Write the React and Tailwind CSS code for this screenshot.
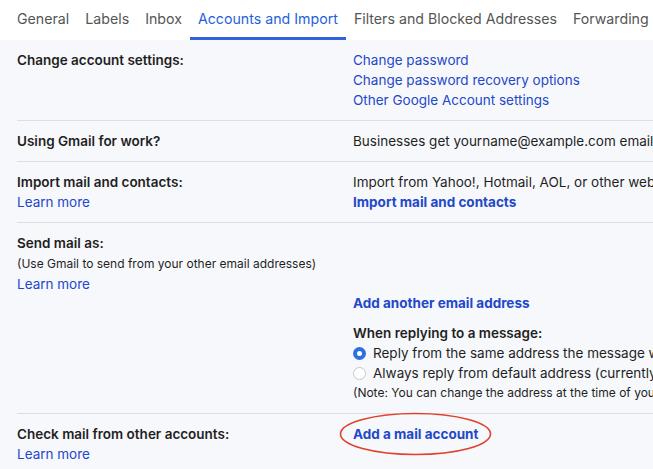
import React from "react";

const tabs = ["General", "Labels", "Inbox", "Accounts and Import", "Filters and Blocked Addresses", "Forwarding"];

function Link({ children, bold }) {
  return <div className={`text-[#2348c9] ${bold ? "font-bold" : ""}`}>{children}</div>;
}

function Row({ left, children, last }) {
  return (
    <div className={`grid grid-cols-[336px_1fr] py-[10px] ${last ? "" : "border-b border-[#dcdee2]"}`}>
      <div>{left}</div>
      <div className="whitespace-nowrap">{children}</div>
    </div>
  );
}

function Radio({ checked, children }) {
  return (
    <div className="flex items-center h-5">
      {checked ? (
        <span className="shrink-0 w-[13px] h-[13px] rounded-full bg-[#2f6fe4] flex items-center justify-center mr-[7px]">
          <span className="w-[5px] h-[5px] rounded-full bg-white" />
        </span>
      ) : (
        <span className="shrink-0 w-[13px] h-[13px] rounded-full bg-white border border-[#c4c7cc] mr-[7px]" />
      )}
      <span>{children}</span>
    </div>
  );
}

export default function App() {
  return (
    <div className="w-[653px] h-[469px] overflow-hidden bg-[#f7f8fb] text-[#1f1f1f] text-[13.5px] leading-5" style={{ fontFamily: "Inter, Roboto, 'Liberation Sans', sans-serif" }}>
      <div className="flex bg-white h-10 pl-[9px] whitespace-nowrap text-[14.2px]">
        {tabs.map((t) => (
          <div
            key={t}
            className={`px-2 flex items-center h-10 border-b-[3px] ${t === "Accounts and Import" ? "text-[#1f5fdc] border-[#2f62dc]" : "text-[#555] border-transparent"}`}
          >
            {t}
          </div>
        ))}
      </div>

      <div className="ml-[17px]">
        <Row left={<div className="font-semibold">Change account settings:</div>}>
          <Link>Change password</Link>
          <Link>Change password recovery options</Link>
          <Link>Other Google Account settings</Link>
        </Row>

        <Row left={<div className="font-semibold">Using Gmail for work?</div>}>
          <div>Businesses get yourname@example.com email</div>
        </Row>

        <Row
          left={
            <>
              <div className="font-semibold">Import mail and contacts:</div>
              <Link>Learn more</Link>
            </>
          }
        >
          <div>Import from Yahoo!, Hotmail, AOL, or other web</div>
          <Link bold>Import mail and contacts</Link>
        </Row>

        <Row
          left={
            <>
              <div className="font-semibold">Send mail as:</div>
              <div className="text-[12px] leading-5 pt-px">(Use Gmail to send from your other email addresses)</div>
              <Link>Learn more</Link>
            </>
          }
        >
          <div className="pt-[60px]">
            <Link bold>Add another email address</Link>
          </div>
          <div className="mt-[10px] font-semibold">When replying to a message:</div>
          <Radio checked>Reply from the same address the message was</Radio>
          <Radio>Always reply from default address (currently</Radio>
          <div className="text-[12px]">(Note: You can change the address at the time of your</div>
        </Row>

        <Row
          last
          left={
            <>
              <div className="font-semibold">Check mail from other accounts:</div>
              <Link>Learn more</Link>
            </>
          }
        >
          <div className="relative inline-block">
            <Link bold>Add a mail account</Link>
            <svg className="absolute left-[-14px] top-[-12px] overflow-visible" width="153" height="44" viewBox="0 0 153 44" fill="none">
              <ellipse cx="76.5" cy="22" rx="75" ry="20.5" stroke="#e0412a" strokeWidth="1.6" />
            </svg>
          </div>
        </Row>
      </div>
    </div>
  );
}
